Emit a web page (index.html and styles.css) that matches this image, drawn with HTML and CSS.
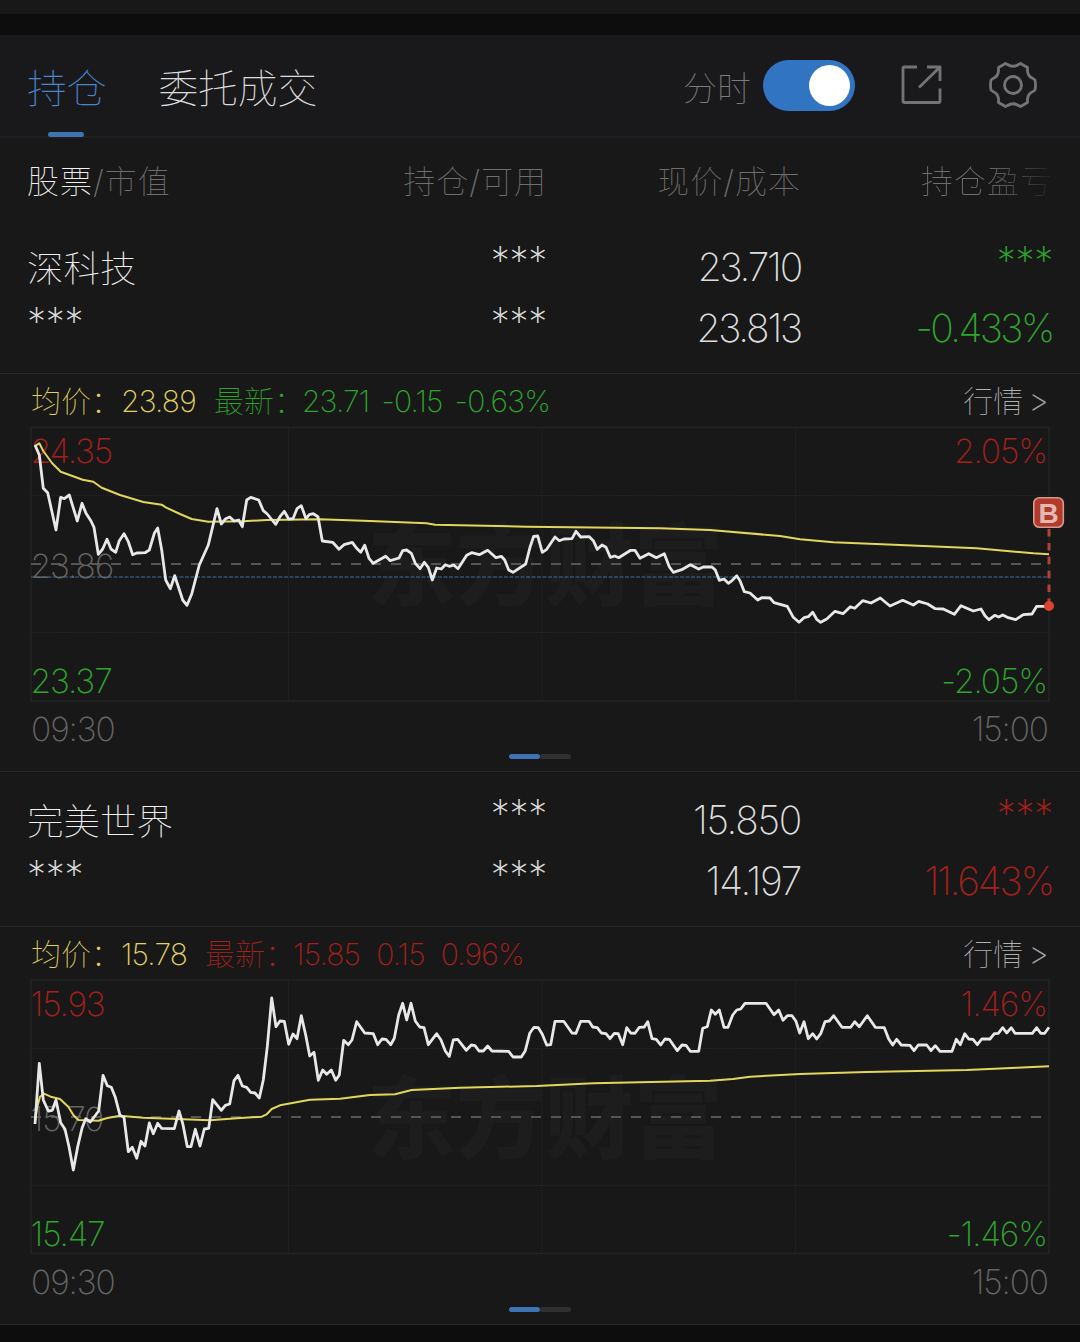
FILE: index.html
```html
<!DOCTYPE html>
<html lang="zh-CN">
<head>
  <meta charset="UTF-8">
  <title>持仓</title>
  <link rel="stylesheet" href="styles.css">
</head>
<body>
  <div class="gap"></div>

  <header class="tabs">
    <div class="tab active">持仓</div>
    <div class="tab">委托成交</div>
    <span class="switch-label">分时</span>
    <div class="switch"><div class="knob"></div></div>
    <svg class="icon-share" width="42" height="42" viewBox="0 0 42 42">
      <path d="M17 3H4.500Q3 3 3 4.500V37Q3 38.500 4.500 38.500H38.500Q40 38.500 40 37V24.500M27 3H40V17M40 3L19 23.500"/>
    </svg>
    <svg class="icon-gear" width="50" height="50" viewBox="0 0 50 50">
      <path d="M17.500 3.500L19.500 4.500Q25 8 30.500 4.500L32.500 3.500L39.500 7.500V11Q40 16.500 45 18.500L47 20Q48 25 47 30L45 31.500Q40 33.500 39.500 39V42.500L32.500 46.500L30.500 45.500Q25 42 19.500 45.500L17.500 46.500L10.500 42.500V39Q10 33.500 5 31.500L3 30Q2 25 3 20L5 18.500Q10 16.500 10.500 11V7.500Z"/>
      <circle cx="25" cy="25" r="8.500"/>
    </svg>
  </header>

  <div class="row columns">
    <div><span class="on">股票</span>/市值</div>
    <div>持仓/可用</div>
    <div>现价/成本</div>
    <div class="fade">持仓盈亏</div>
  </div>

  <section class="stock">
    <div class="row holding">
      <div class="name">深科技</div>
      <div class="stars">***</div>
      <div>23.710</div>
      <div class="stars green">***</div>
      <div class="stars">***</div>
      <div class="stars">***</div>
      <div>23.813</div>
      <div class="rate green">-0.433%</div>
    </div>
    <div class="quote">
      <span class="yellow">均价：</span><span class="num avg-num yellow">23.89</span>
      <span class="latest green">最新：</span><span class="num green">23.71</span>
      <span class="num green">-0.15</span>
      <span class="num green">-0.63%</span>
      <span class="more">行情</span><span class="arrow">&gt;</span>
    </div>
    <svg class="chart" width="1080" height="330" viewBox="0 0 1080 330">
      <text class="watermark" x="367" y="178">东方财富</text>
      <rect class="frame" x="31" y="7.500" width="1018" height="273.500"/>
      <path class="grid" d="M31 75.500H1049M31 212.500H1049M288.500 7V281M542 7V281M795.500 7V281"/>
      <path class="base" d="M31 144H1042"/>
      <path class="cost" d="M31 157H1049"/>
      <text class="red" x="30.500" y="42.500">24.35</text>
      <text class="red end" x="1047" y="42.500">2.05%</text>
      <text class="gray" x="30.500" y="157.500">23.86</text>
      <text class="green" x="30.500" y="272.500">23.37</text>
      <text class="green end" x="1047" y="272.500">-2.05%</text>
      <text class="gray" x="31" y="320.500">09:30</text>
      <text class="gray end" x="1048" y="320.500">15:00</text>
      <polyline class="avg" points="35,26 39.3,23.3 43.3,31 52,43 60.7,51.7 82.7,59.7 93.3,61.7 101.7,67.7 120,75 143.3,82 161.7,84.7 165.7,87.3 180,94 191.7,99 208.3,101.7 243.3,101.3 266.7,100 320,99.3 370,101 426.7,103.3 435,104.7 526.7,106.7 660,108.3 710,110 780,116 800,119.3 833.3,122.3 900,125 976.7,128.3 1033.3,133.3 1049,134.3"/>
      <polyline class="price" points="35,25 39.3,35 43.3,68.3 47.7,72.7 56,110 60.7,77.3 64.3,78.7 69.3,75 77.3,101 82,83.3 86,93.3 91,101 94,107.3 98.3,134.3 102.7,129 107,119.3 111,129 115.7,132.3 119.3,120.7 124,113.7 128.3,121.7 132.7,134.7 136.7,133 145,132.7 149.3,130 154.3,113.3 157.7,108 161.7,130 165.7,160 170.3,168.7 174.7,155.7 180,171.7 182.7,180 187,185.3 191.7,174 199.3,145 208.3,125 212.7,106.7 217,88.7 221.3,104 225.7,98.7 229.7,97 234,101 238.7,100 242.3,106.7 246.7,80 250.7,77.3 258.7,80 263.3,90.7 267.3,94 271.3,99 275.7,104.3 280,96.7 284.3,91.3 288.7,99 293,98.7 297,88.7 301.3,85.7 306,98.7 309.3,94.7 313.3,93.7 318,96.7 322.3,121 332.7,122.3 339,129.3 344,124.7 352.3,122.3 356.7,128.3 360.7,132.3 364.7,125.3 369,138.3 373.3,143.3 385.7,136.3 390.3,140.7 399,138 402.7,130.7 406.7,130 411.3,133.3 415.3,143.3 420,148.7 424.3,142.3 428.3,147.3 432.3,160 436.7,148 441.3,149 445.3,144.7 449.3,146.3 453.7,145 458,148.7 466.7,135.3 471.7,132.7 479.3,134.7 487.7,130.3 496,137.7 501.3,136.3 504.7,140 508.7,150 513,152.3 525.7,144 530,127.3 533.7,116.3 537.7,116 542.3,132.3 546.7,129.3 555,117 559.3,120.7 564,119 572,118.7 576,111.3 580.7,117 589.3,116.7 593.3,120.7 597.3,129.3 602,125 606,127.3 610.3,137.3 614.7,136 618.7,137.7 630.7,130.3 635,130.3 640,138.3 648.7,133.7 656.3,137.7 664.3,133.7 669.3,146.7 673.3,152.3 681.7,149.7 690.3,144.7 698.7,149 703.3,147 712,147 715.3,150 719.3,160.3 724,159 728.3,163.3 732.3,160.3 736.7,155.7 740,160.7 744.3,171.7 750,173 757.7,180 761.7,177.7 770,178 774,182.7 787.3,186.3 793.3,197.3 799,202.3 804,197.7 808.3,196.7 812.7,192.3 816.7,199.3 820.7,202.3 826.7,199 835,191.3 843,193.7 850.3,186.7 854.7,188.3 862.7,180.7 871,183 880.3,178 890,186 902.7,180.3 913.3,185 918.7,181.3 927.7,184 935.3,188.7 943.3,189 954.3,194.3 961,185.7 973.3,191 981,189 985,195.7 989,199.7 994.7,195.3 998.7,197 1002.7,195 1007.3,197.3 1015.7,199.7 1023.3,194.7 1032,194 1036.7,186.3 1049,186.3"/>
      <path class="buy-line" d="M1049 109V182"/>
      <circle class="buy-dot" cx="1049" cy="186" r="5"/>
      <rect class="buy-box" x="1033.800" y="77.800" width="29.500" height="29.500" rx="5.500"/>
      <text class="buy-text" x="1048.500" y="102.500">B</text>
    </svg>
    <div class="pager"><i class="on"></i><i></i></div>
  </section>

  <section class="stock">
    <div class="row holding">
      <div class="name">完美世界</div>
      <div class="stars">***</div>
      <div class="loose">15.850</div>
      <div class="stars red">***</div>
      <div class="stars">***</div>
      <div class="stars">***</div>
      <div class="loose">14.197</div>
      <div class="red">11.643%</div>
    </div>
    <div class="quote">
      <span class="yellow">均价：</span><span class="num avg-num yellow">15.78</span>
      <span class="latest red">最新：</span><span class="num red">15.85</span>
      <span class="num red">0.15</span>
      <span class="num red">0.96%</span>
      <span class="more">行情</span><span class="arrow">&gt;</span>
    </div>
    <svg class="chart" width="1080" height="330" viewBox="0 0 1080 330">
      <text class="watermark" x="367" y="178">东方财富</text>
      <rect class="frame" x="31" y="7" width="1018" height="273.500"/>
      <path class="grid" d="M31 75.500H1049M31 212.500H1049M288.500 7V281M542 7V281M795.500 7V281"/>
      <path class="base" d="M31 144H1042"/>
      <text class="red" x="30.500" y="42.500">15.93</text>
      <text class="red end" x="1047" y="42.500">1.46%</text>
      <text class="gray" x="30.500" y="157.500">15.70</text>
      <text class="green" x="30.500" y="272.500">15.47</text>
      <text class="green end" x="1047" y="272.500">-1.46%</text>
      <text class="gray" x="31" y="320.500">09:30</text>
      <text class="gray end" x="1048" y="320.500">15:00</text>
      <polyline class="avg" points="35,148 37.3,133.7 40,123.7 44,120.7 50.7,123.7 60,126 68.3,133.7 73.3,142 78.3,147 98.3,147.7 107.3,145 120,142.7 143.3,144.7 210,147.3 236.7,145.3 261.7,143.7 266.7,141.3 271.7,136 280,132.3 310,126.7 340,125.7 370,122 395,121.3 411.7,117 460,114.7 536.7,113 593.3,110.3 710,107.7 733,106 750,103.7 800,101 866.7,99 966.7,97 1016.7,94.7 1049,93.3"/>
      <polyline class="price" points="35,151 39.3,90.3 43.3,127 48.3,138 52.3,137.3 56,127 60.7,149.7 65,156.3 69,173.7 73.3,197 77.7,173.7 82,155.3 85.7,145.7 90.3,149 98.7,138 103,102.3 107.3,112.7 111.3,114.3 115.3,124.3 120,142.3 124,144.3 128.3,178.7 132.3,174.3 136.7,185.3 141,168.3 145,173 149.3,150 153.3,160.7 157.7,150.3 161.7,155.3 174.3,155.7 179,138 182.7,150.3 187.3,173.7 191,173.7 195.3,156.3 200,173 204.3,156 208.7,155.3 212.7,126.7 221.3,137.3 225.3,132.3 229.7,131 234,107.7 238,102.3 242.3,113 246.7,114.3 250.7,119.3 255,120 259.3,125 263.3,107 267.3,73.7 271.7,25 276,53.7 280,48 284.3,48.3 288.7,71.3 293,61 297,65.7 301.3,42.7 305.7,62 309.7,83 314,79.3 318.3,107.3 322.7,97 326.7,101.3 331.3,97 335.7,107.3 339.3,102 343.7,67.3 348.3,71.7 352,67 356.7,48.7 364.7,60 373.3,60.7 377.7,71.7 382,66 386,66.3 390.7,71.7 394.3,65.3 398.7,42 402.7,30.3 406.7,47 411,30.3 415.3,48 419.7,54 424,54.7 428.3,71.7 436.7,60.7 441,67 445.3,78 449.3,83.3 453.3,67 457.7,66.3 466.3,77.3 471.3,72 475,72.7 479,78 483.3,78 487.7,73 492,78 508.7,78.3 513,84 521.3,84 525.3,77.7 529.7,60.3 534,54.3 538.3,54.7 542.3,61.3 546.7,72 550.7,71.7 555,48.3 563.7,48.3 572,60 576,60.3 580.7,48.3 589,48.3 592.7,54 597.3,54.7 601.3,60 606,60.7 610,65.7 614.3,60.3 618.3,60.7 622.7,71.7 626.7,54.7 630.7,60 635,60.3 639.3,54.3 644.3,54 647.7,48.7 652,65.7 656.3,66.3 660.7,72 665,66 669.3,66.3 677.3,77.7 682,72 686,72.3 690.3,78.3 698.7,78.3 702.7,55.3 707.3,53.7 711.3,37 715.3,41.3 719.3,37 724,54.3 728,54.3 732.7,42 736.7,37 740.7,36 745,30.3 766,30.3 774,41.7 778.7,37 783,47.3 787.3,42.7 792,42.7 796,48.3 799.7,60 804,48.7 808.3,65.7 812.7,60.7 816.7,66 820.7,60.7 825,48.7 829.3,48 833.7,42.7 842,54.3 850.7,54.3 854.7,48.7 859.3,53.7 867.3,42.7 875.3,54.3 884.3,54.7 888.7,66 892.7,72 896.7,66.3 901.3,72 910,72.3 914,77.7 918.3,72 926.7,72 931,77.7 935.3,72.7 940,78.3 952,78.3 956.3,66.3 960.3,71.7 964.7,60.7 968.7,66 973,66.3 977.3,71.7 981.7,66 990,66 994.3,60.7 998.3,60.3 1002.7,54.7 1006.7,60 1011.3,54.7 1015,60.3 1032.3,60.3 1036.7,54.7 1040.7,60.3 1044.7,60.3 1049,54.3"/>
    </svg>
    <div class="pager"><i class="on"></i><i></i></div>
  </section>
</body>
</html>
```

FILE: styles.css
```css
* {
  box-sizing: border-box;
}

body {
  margin: 0;
  padding-top: 14px;
  width: 1080px;
  height: 1342px;
  overflow: hidden;
  background: linear-gradient(#181818 1325px, #0d0d0d 1325px);
  color: #dcdcdc;
  font-family: "Inter", "Noto Sans CJK SC", sans-serif;
  font-weight: 150;
}

.gap {
  height: 21px;
  background: #0d0d0d;
}

/* top tabs */
.tabs {
  display: flex;
  align-items: center;
  height: 103px;
  padding: 0 42px 1px 27px;
  background: #19191b;
  border-bottom: 2px solid #202020;
}

.tab {
  position: relative;
  margin-right: 52px;
  padding-top: 8px;
  font-size: 39.7px;
  line-height: 93px;
}

.tab.active {
  color: #4a86cc;
}

.tab.active::after {
  content: "";
  position: absolute;
  left: 21px;
  bottom: -1px;
  width: 36px;
  height: 5px;
  border-radius: 3px;
  background: #3e74b4;
}

.switch-label {
  margin-left: auto;
  padding-top: 3px;
  font-size: 34px;
  color: #7c7c7c;
}

.switch {
  width: 92px;
  height: 51px;
  margin-left: 12px;
  padding: 5px;
  border-radius: 26px;
  background: #3174c2;
}

.knob {
  width: 41px;
  height: 41px;
  margin-left: auto;
  border-radius: 50%;
  background: #fff;
}

.icon-share,
.icon-gear {
  fill: none;
  stroke: #747474;
  stroke-width: 2.8;
  stroke-linejoin: round;
}

.icon-share {
  margin-left: 45px;
}

.icon-gear {
  margin-left: 46px;
}

/* four column rows */
.row {
  display: grid;
  grid-template-columns: 266px 254px 254px 252px;
  padding: 0 27px;
  text-align: right;
}

.row > div:nth-child(4n+1) {
  text-align: left;
}

.columns {
  height: 81px;
  font-size: 32px;
  line-height: 87px;
  letter-spacing: 1px;
  color: #6e6e6e;
}

.columns .on {
  color: #f0f0f0;
}

.fade {
  -webkit-mask-image: linear-gradient(to right, #000 72%, transparent 104%);
  mask-image: linear-gradient(to right, #000 72%, transparent 104%);
}

.holding {
  grid-auto-rows: 61px;
  height: 155px;
  padding-top: 17px;
  border-bottom: 1px solid #282828;
  font-size: 39px;
  line-height: 61px;
  letter-spacing: -2.2px;
}

.holding .name {
  padding-top: 3px;
  font-size: 36.5px;
  letter-spacing: 0;
  color: #f0f0f0;
}

.holding .stars {
  font-size: 38px;
  line-height: 49px;
  letter-spacing: -0.3px;
}

.holding .rate {
  letter-spacing: -2.6px;
}

.holding .loose {
  letter-spacing: -1.3px;
}

.quote {
  display: flex;
  height: 46px;
  padding: 0 31px;
  font-size: 30px;
  line-height: 54px;
}

.num {
  margin-right: 16px;
  letter-spacing: -0.8px;
}

.num.green {
  margin-right: 12px;
}

.num.avg-num {
  margin-right: 18px;
}

.latest {
  margin-right: -2px;
}

.more {
  margin-left: auto;
  color: #b0b0b0;
}

.arrow {
  margin-left: 5px;
  font-size: 32px;
  color: #a0a0a0;
}

.yellow { color: #e0d266; }
.green { color: #2ca52c; }
.red { color: #a3201c; }

/* chart */
.chart {
  display: block;
  fill: none;
}

.chart text {
  font-size: 33.5px;
  letter-spacing: -1.1px;
}

.chart .end { text-anchor: end; }
.chart .red { fill: #a3201c; }
.chart .green { fill: #2ca52c; }
.chart .gray { fill: #646464; }

.chart .watermark {
  font-family: "Noto Sans CJK SC", sans-serif;
  font-size: 89px;
  font-weight: 900;
  letter-spacing: 0;
  fill: #1d1d1d;
}

.frame {
  stroke: #232323;
  stroke-width: 1.5;
}

.grid {
  stroke: #2a2a2a;
  stroke-dasharray: 1 1.5;
}

.base {
  stroke: #555;
  stroke-width: 1.8;
  stroke-dasharray: 10 10;
}

.cost {
  stroke: #2f5278;
  stroke-width: 1.5;
  stroke-dasharray: 4 1.5;
}

.avg {
  stroke: #e2d75c;
  stroke-width: 2;
  stroke-linejoin: round;
}

.price {
  stroke: #e8e8e8;
  stroke-width: 2.8;
  stroke-linejoin: round;
}

.buy-line {
  stroke: #b04434;
  stroke-width: 3;
  stroke-dasharray: 7.5 6.4;
}

.buy-dot {
  fill: #d8442f;
}

.buy-box {
  fill: #b23a2a;
  stroke: #d59a90;
  stroke-width: 1.6;
}

.chart .buy-text {
  font-family: "Liberation Sans", Arial, sans-serif;
  font-size: 28px;
  font-weight: 700;
  letter-spacing: 0;
  text-anchor: middle;
  fill: #e2b8b2;
}

/* page dots */
.pager {
  display: flex;
  justify-content: center;
  height: 22px;
  padding-top: 4px;
  border-bottom: 1px solid #282828;
}

.pager i {
  width: 31px;
  height: 5px;
  border-radius: 3px;
  background: #303030;
}

.pager .on {
  background: #3e74b4;
}
```
